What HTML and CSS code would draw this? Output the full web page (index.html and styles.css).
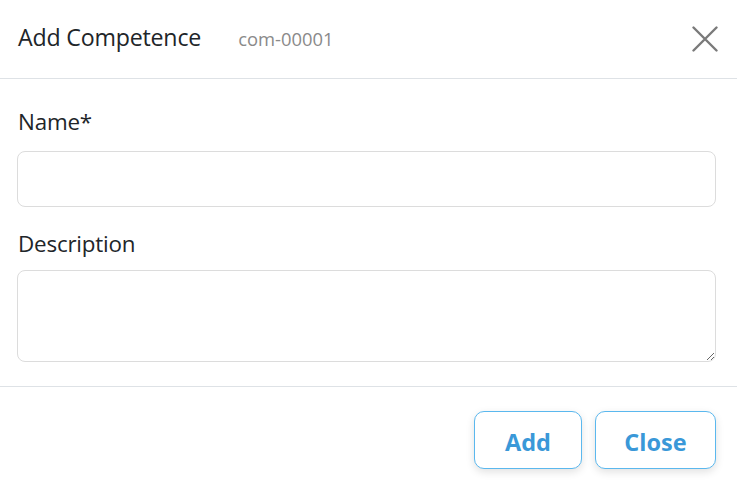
FILE: index.html
```html
<!DOCTYPE html>
<html>
<head>
<meta charset="utf-8">
<link rel="stylesheet" href="styles.css">
</head>
<body>
<div class="modal">
  <div class="header">
    <div class="title-group">
      <span class="title">Add Competence</span>
      <span class="code">com-00001</span>
    </div>
    <button class="close-x" aria-label="Close">
      <svg width="26" height="26" viewBox="0 0 26 26"><path d="M1.5 1.5 L24.5 24.5 M24.5 1.5 L1.5 24.5" stroke="#7a7a7a" stroke-width="2.4" stroke-linecap="round" fill="none"/></svg>
    </button>
  </div>
  <div class="body">
    <label class="label">Name*</label>
    <input class="input" type="text">
    <label class="label label-desc">Description</label>
    <textarea class="textarea"></textarea>
  </div>
  <div class="footer">
    <button class="btn btn-add">Add</button>
    <button class="btn btn-close">Close</button>
  </div>
</div>
</body>
</html>
```

FILE: styles.css
```css
* { box-sizing: border-box; }
html, body { margin: 0; padding: 0; background: #fff; }
body { font-family: "Open Sans", "Noto Sans", sans-serif; color: #212529; }
.modal { width: 737px; height: 488px; display: flex; flex-direction: column; }
.header {
  height: 79px;
  border-bottom: 1px solid #dee2e6;
  display: flex;
  align-items: center;
  justify-content: space-between;
  padding: 0 19px 2px 18px;
}
.title-group { display: flex; align-items: baseline; gap: 37px; line-height: 30px; }
.title { font-size: 23.2px; color: #212529; letter-spacing: -0.2px; }
.code { font-size: 18.4px; color: #8a8a8a; }
.close-x { background: none; border: 0; padding: 0; width: 26px; height: 26px; display: flex; margin-top: 2px; }
.body {
  padding: 30px 21px 24px 17px;
  display: flex;
  flex-direction: column;
  border-bottom: 1px solid #dee2e6;
}
.label { font-size: 22.4px; line-height: 26px; color: #212529; padding-left: 1px; letter-spacing: -0.2px; }
.input {
  margin-top: 16px;
  height: 56px;
  border: 1px solid #dcdcdc;
  border-radius: 8px;
  font: inherit;
  outline: none;
}
.label-desc { margin-top: 24px; }
.textarea {
  margin-top: 13px;
  height: 92px;
  border: 1px solid #dcdcdc;
  border-radius: 8px;
  font: inherit;
  resize: vertical;
  outline: none;
  display: block;
}
.footer {
  display: flex;
  justify-content: flex-end;
  gap: 13px;
  padding: 24px 21px 0 0;
}
.btn {
  height: 58px;
  background: #fff;
  border: 1px solid #5bb8ee;
  border-radius: 10px;
  color: #3a98d8;
  font-family: "Open Sans", sans-serif;
  font-weight: 700;
  font-size: 23.5px;
  line-height: 30px;
  padding: 3px 0 0 0;
  box-shadow: 0 3px 8px rgba(0,0,0,0.12);
}
.btn-add { width: 108px; }
.btn-close { width: 121px; }
```
